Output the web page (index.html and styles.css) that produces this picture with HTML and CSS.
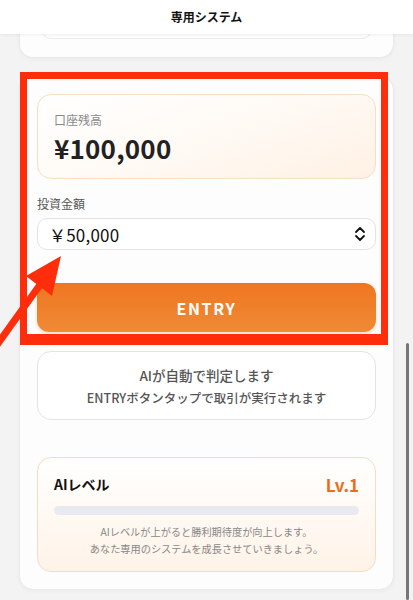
FILE: index.html
```html
<!DOCTYPE html>
<html lang="ja">
<head>
<meta charset="utf-8">
<title>専用システム</title>
<link rel="stylesheet" href="styles.css">
</head>
<body>
<header class="topbar"><h1 class="topbar-title">専用システム</h1></header>
<main class="scroll">
  <section class="card card-prev"><div class="prev-inner"></div></section>
  <section class="card card-main">
    <div class="balance">
      <p class="balance-label">口座残高</p>
      <p class="balance-value">¥100,000</p>
    </div>
    <p class="field-label">投資金額</p>
    <div class="select">
      <span class="select-value">￥50,000</span>
      <svg class="select-icon" width="12" height="16" viewBox="0 0 12 16" aria-hidden="true"><path d="M2 6 L6 2 L10 6 M2 10 L6 14 L10 10" fill="none" stroke="#111" stroke-width="1.8" stroke-linecap="round" stroke-linejoin="round"/></svg>
    </div>
    <button class="entry" type="button">ENTRY</button>
    <div class="info">
      <p class="info-title">AIが自動で判定します</p>
      <p class="info-sub">ENTRYボタンタップで取引が実行されます</p>
    </div>
    <div class="level">
      <div class="level-head">
        <span class="level-title">AIレベル</span>
        <span class="level-value">Lv.1</span>
      </div>
      <div class="level-bar"></div>
      <p class="level-note">AIレベルが上がると勝利期待度が向上します。<br>あなた専用のシステムを成長させていきましょう。</p>
    </div>
  </section>
</main>
<div class="annot-rect"></div>
<svg class="annot-arrow" width="90" height="120" viewBox="0 240 90 120" aria-hidden="true">
  <line x1="-6" y1="349" x2="42" y2="282" stroke="#fe2d0b" stroke-width="7"/>
  <polygon points="61,256 26,276 52,296" fill="#fe2d0b"/>
</svg>
<div class="scrollbar"></div>
</body>
</html>
```

FILE: styles.css
```css
* { box-sizing: border-box; }
html, body { margin: 0; padding: 0; }
body {
  width: 413px;
  height: 600px;
  overflow: hidden;
  position: relative;
  background: #f3f3f3;
  font-family: "Noto Sans CJK JP", "Noto Sans", sans-serif;
  color: #222;
}
p { margin: 0; }
.topbar {
  position: relative;
  z-index: 2;
  height: 34px;
  background: #fff;
  box-shadow: 0 1px 3px rgba(0,0,0,0.06);
  display: flex;
  align-items: center;
  justify-content: center;
}
.topbar-title {
  margin: 0;
  font-size: 12px;
  font-weight: 600;
  color: #111;
  line-height: 16px;
}
.scroll {
  height: 566px;
  overflow: hidden;
  padding: 0 19px;
}
.card {
  background: #fdfdfd;
  border: 1px solid #e9e9e9;
  border-radius: 14px;
  box-shadow: 0 1px 4px rgba(0,0,0,0.04);
}
.card-prev {
  margin-top: -40px;
  height: 64px;
  padding: 0 20px;
  border-top: none;
  border-radius: 0 0 14px 14px;
}
.prev-inner {
  height: 45px;
  border: 1px solid #ececec;
  border-top: none;
  border-radius: 0 0 12px 12px;
}
.card-main {
  margin-top: 18px;
  padding: 17px 17px 17px;
  display: flex;
  flex-direction: column;
}
.balance {
  height: 85px;
  padding: 16px 16px;
  border: 1px solid #f5dfc6;
  border-radius: 14px;
  background: linear-gradient(160deg, #ffffff 0%, #fff9f3 55%, #fff1e4 100%);
}
.balance-label {
  font-size: 12px;
  line-height: 18px;
  color: #8a8a8a;
}
.balance-value {
  margin-top: 4px;
  font-size: 26px;
  line-height: 30px;
  font-weight: 700;
  color: #222;
  letter-spacing: 0.2px;
}
.field-label {
  margin-top: 17px;
  font-size: 12px;
  line-height: 16px;
  color: #555;
}
.select {
  margin-top: 6px;
  height: 32px;
  border: 1px solid #e3e3e3;
  border-radius: 10px;
  background: #fff;
  display: flex;
  align-items: center;
  justify-content: space-between;
  padding: 0 9px 0 11px;
}
.select-value {
  font-size: 17px;
  color: #111;
  letter-spacing: 0.2px;
}
.select-icon { display: block; }
.entry {
  margin-top: 33px;
  height: 49px;
  border: none;
  border-radius: 12px;
  background: linear-gradient(180deg, #f07620 0%, #ef8a36 100%);
  color: #fff;
  font-family: inherit;
  font-size: 16px;
  font-weight: 700;
  letter-spacing: 1.6px;
  box-shadow: 0 2px 4px rgba(239,120,40,0.25);
}
.info {
  margin-top: 19px;
  height: 69px;
  border: 1px solid #e4e4e4;
  border-radius: 14px;
  background: #fff;
  padding-top: 13px;
  text-align: center;
}
.info-title {
  font-size: 13.5px;
  line-height: 20px;
  font-weight: 500;
  color: #555;
}
.info-sub {
  margin-top: 4px;
  font-size: 12.5px;
  line-height: 18px;
  font-weight: 500;
  color: #555;
}
.level {
  margin-top: 37px;
  height: 115px;
  border: 1px solid #f7dcc4;
  border-radius: 14px;
  background: linear-gradient(180deg, #ffffff 0%, #fff8f1 60%, #fff3e8 100%);
  padding: 15px 16px 0;
}
.level-head {
  display: flex;
  justify-content: space-between;
  align-items: center;
  height: 22px;
}
.level-title {
  font-size: 14px;
  font-weight: 700;
  color: #111;
}
.level-value {
  font-size: 17px;
  font-weight: 700;
  color: #e86e1a;
}
.level-bar {
  margin-top: 11px;
  height: 9px;
  border-radius: 5px;
  background: #e8eaf0;
}
.level-note {
  margin-top: 8px;
  font-size: 10.2px;
  line-height: 17px;
  color: #888;
  text-align: center;
}
.annot-rect {
  position: absolute;
  left: 20px;
  top: 72px;
  width: 368px;
  height: 273px;
  border: 7px solid #fe2d0b;
  border-bottom-width: 11px;
  z-index: 3;
}
.annot-arrow {
  position: absolute;
  left: 0;
  top: 240px;
  z-index: 4;
}
.scrollbar {
  position: absolute;
  left: 406px;
  top: 343px;
  width: 3px;
  height: 257px;
  border-radius: 2px;
  background: #777;
  z-index: 3;
}
```
